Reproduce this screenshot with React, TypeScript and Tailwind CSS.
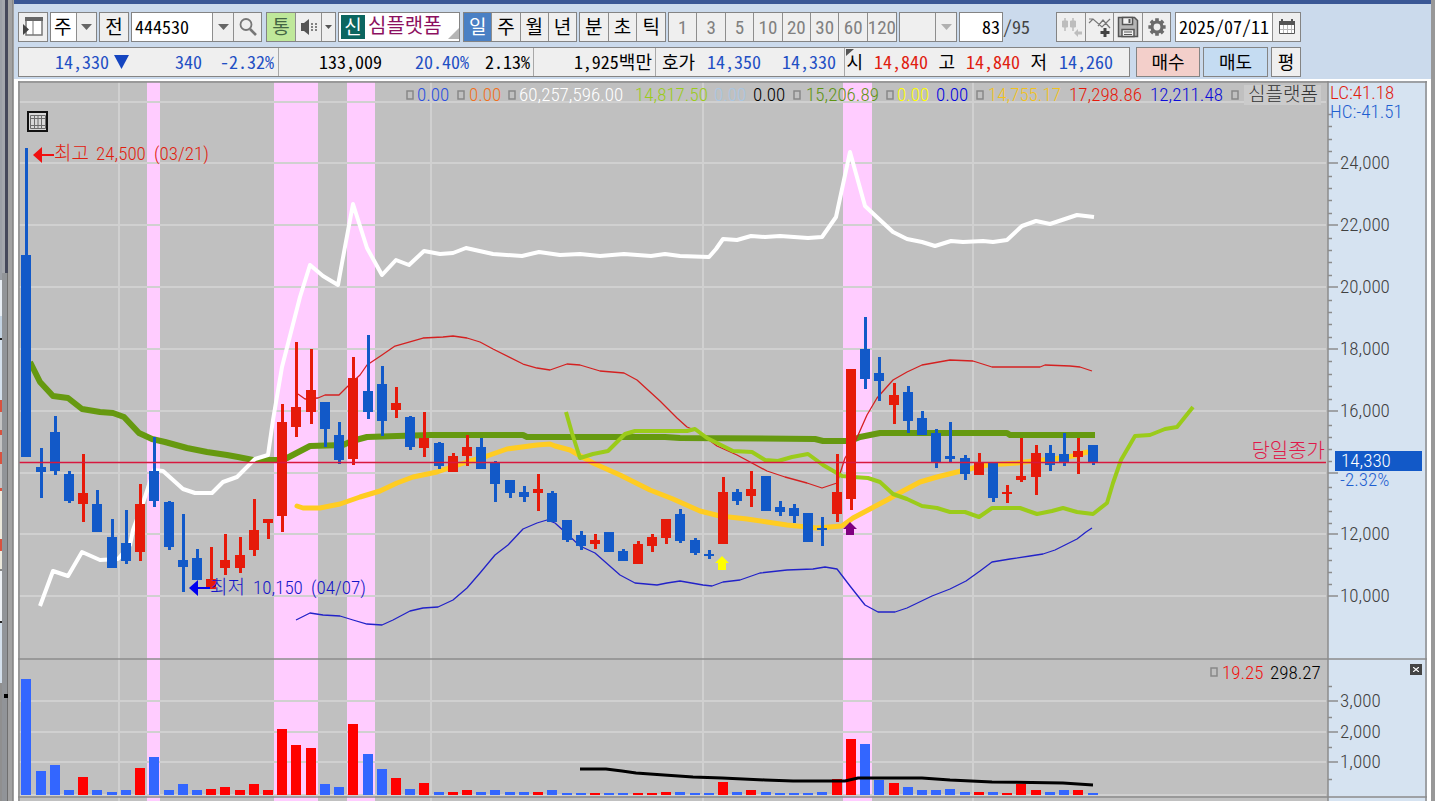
/**
 * Daily candle chart window
 *
 * Layout:
 *   - Toolbar: symbol lookup, period switches, zoom range, date
 *   - Quote strip with the order buttons
 *   - Price pane and volume pane drawn in one SVG
 */
import React from 'react';
import clsx from 'clsx';

const BTN = 'flex items-center justify-center shrink-0 h-full border-[#8e8e8e]';
const GROUP = 'flex shrink-0 h-[30px] border border-[#848484]';
const MONO = "font-['Noto_Sans_Mono_CJK_KR',monospace]";
const NARROW = "font-['Roboto_Condensed','Noto_Sans_CJK_KR',sans-serif]";

const RED = '#e61a0a';
const BLUE = '#1259c8';

/* ---------------------------------------------------------------- data */

// [high, body top, body bottom, low, volume top, rising]
type Bar = [number, number, number, number, number, 0 | 1];

const BARS: Bar[] = [
  [148, 255, 457, 457, 679, 0],
  [448, 467, 472, 498, 771, 0],
  [416, 432, 471, 475, 765, 0],
  [471, 474, 501, 503, 790, 0],
  [454, 493, 504, 522, 777, 1],
  [490, 504, 532, 532, 790, 0],
  [519, 537, 568, 568, 792, 0],
  [510, 543, 561, 564, 790, 0],
  [484, 504, 552, 561, 768, 1],
  [437, 471, 501, 507, 757, 0],
  [501, 502, 547, 550, 790, 0],
  [514, 560, 567, 592, 784, 0],
  [549, 558, 580, 580, 790, 0],
  [547, 579, 589, 589, 789, 1],
  [534, 560, 568, 575, 787, 1],
  [537, 555, 568, 573, 790, 1],
  [499, 530, 550, 556, 784, 1],
  [519, 519, 523, 539, 790, 1],
  [404, 422, 516, 532, 729, 1],
  [342, 407, 427, 437, 745, 1],
  [349, 390, 412, 424, 748, 1],
  [402, 402, 429, 447, 784, 0],
  [422, 435, 460, 464, 787, 0],
  [357, 378, 459, 465, 724, 1],
  [335, 391, 412, 419, 754, 0],
  [366, 384, 421, 436, 769, 0],
  [387, 403, 410, 418, 778, 1],
  [416, 417, 447, 450, 789, 0],
  [412, 438, 448, 457, 783, 1],
  [442, 443, 466, 469, 792, 0],
  [453, 456, 472, 472, 792, 1],
  [435, 447, 456, 466, 790, 1],
  [438, 447, 469, 469, 792, 0],
  [461, 463, 484, 502, 790, 0],
  [480, 480, 493, 498, 792, 0],
  [486, 492, 497, 502, 792, 0],
  [474, 489, 493, 511, 792, 1],
  [491, 493, 522, 522, 790, 0],
  [520, 520, 540, 542, 793, 0],
  [531, 535, 546, 550, 793, 0],
  [534, 540, 544, 549, 793, 1],
  [532, 532, 552, 552, 793, 0],
  [549, 551, 561, 561, 793, 0],
  [541, 544, 564, 564, 793, 1],
  [534, 537, 546, 552, 793, 1],
  [519, 519, 538, 544, 792, 1],
  [509, 514, 541, 543, 792, 0],
  [538, 540, 553, 555, 793, 0],
  [550, 554, 556, 559, 793, 0],
  [477, 492, 544, 544, 782, 1],
  [489, 492, 501, 505, 792, 0],
  [471, 489, 496, 507, 790, 1],
  [476, 476, 511, 511, 792, 0],
  [501, 507, 512, 516, 793, 0],
  [504, 508, 516, 523, 793, 0],
  [513, 513, 542, 542, 793, 0],
  [517, 528, 530, 546, 792, 0],
  [454, 492, 514, 522, 779, 1],
  [369, 369, 499, 510, 739, 1],
  [317, 349, 379, 389, 744, 0],
  [357, 373, 381, 401, 780, 0],
  [383, 395, 405, 424, 783, 1],
  [386, 392, 421, 433, 787, 0],
  [411, 418, 435, 435, 790, 0],
  [429, 433, 462, 468, 790, 0],
  [422, 456, 459, 462, 789, 0],
  [455, 458, 474, 480, 792, 0],
  [453, 463, 475, 475, 792, 1],
  [463, 463, 498, 502, 792, 0],
  [485, 492, 494, 503, 793, 1],
  [438, 476, 480, 482, 784, 1],
  [445, 453, 477, 495, 790, 1],
  [445, 453, 465, 471, 792, 0],
  [433, 454, 462, 466, 790, 0],
  [438, 451, 457, 474, 790, 1],
  [445, 445, 462, 465, 793, 0],
];

const barX = (i: number): number => Math.round(26.4 + 14.215 * i);

const OBV =
  '40,606 53,571 68,576 82,552 100,560 118,559 130,545 133,530 144,500 154,470 163,471 183,489 195,493 212,493 223,482 237,477 255,459 268,455 273,420 282,367 300,297 310,265 323,276 338,285 342,263 353,204 367,248 382,275 396,260 409,265 424,251 440,254 453,253 466,248 493,254 522,256 539,252 560,255 580,254 600,256 624,254 651,256 665,254 680,256 709,257 716,249 723,239 737,240 751,236 765,237 780,236 808,238 822,237 836,217 850,152 865,206 880,220 893,232 907,239 922,242 935,246 951,241 963,242 983,241 993,242 1007,240 1022,226 1036,221 1050,224 1077,215 1094,217';
const VWAP =
  '30,362 40,382 53,396 68,398 82,409 100,412 113,413 124,417 139,433 152,439 165,442 187,448 207,452 227,455 238,457 253,460 277,460 287,458 310,446 343,445 352,441 367,437 397,436 430,435 523,435 527,437 665,437 680,438 815,439 823,441 850,441 860,437 880,433 1007,433 1010,435 1095,435';
const MA20 =
  '297,506 303,508 320,508 340,504 360,497 380,491 397,483 413,477 437,472 467,462 487,456 507,449 537,445 550,444 555,446 570,450 593,463 620,475 650,490 673,499 700,511 720,516 747,519 787,525 817,528 842,526 853,518 870,509 887,500 903,491 920,482 937,477 953,473 973,468 987,465 1017,463 1033,461 1053,459 1073,456 1087,452';
const LAGGING =
  '566,412 572,433 580,458 593,454 608,451 625,434 635,431 687,431 695,429 707,438 733,451 752,452 765,460 778,461 792,457 808,454 823,465 842,476 853,477 868,478 880,482 893,494 907,499 922,506 937,508 950,512 965,512 979,517 992,508 1020,508 1037,514 1052,511 1063,508 1077,512 1093,514 1107,503 1113,483 1121,460 1135,436 1150,435 1165,429 1177,427 1185,417 1193,407';
const BAND_UP =
  '298,394 305,399 318,398 325,395 339,395 347,387 360,375 367,365 382,355 395,346 423,338 443,337 453,336 467,338 480,342 493,349 523,364 537,368 550,370 567,364 580,365 600,371 624,373 637,380 660,401 677,418 687,427 697,431 717,446 737,455 767,471 785,477 807,483 822,488 837,483 845,458 855,442 859,433 867,415 877,398 893,380 907,372 922,365 950,360 973,361 992,367 1040,367 1045,365 1070,366 1080,367 1092,371';
const BAND_LOW =
  '296,620 310,613 323,615 340,616 353,620 367,624 382,625 393,620 410,611 423,608 438,607 453,600 467,588 480,573 495,555 508,545 523,529 537,523 547,520 555,523 566,533 580,546 595,553 620,575 635,583 657,585 667,583 680,581 703,585 712,586 723,582 740,580 760,573 787,570 813,569 825,567 837,569 850,586 865,605 878,612 895,612 907,608 932,596 950,589 966,581 980,571 992,562 1010,559 1030,556 1043,554 1055,550 1065,545 1077,539 1086,532 1092,528';
const VOLUME_MA =
  '580,769 606,769 622,771 636,773 664,775 693,777 722,778 765,780 793,781 845,781 858,778 922,778 950,780 992,782 1063,783 1093,785';

const PRICE_LEVELS: [number, string][] = [
  [163, '24,000'],
  [225, '22,000'],
  [287, '20,000'],
  [349, '18,000'],
  [411, '16,000'],
  [473, ''],
  [534, '12,000'],
  [596, '10,000'],
];
const VOLUME_LEVELS: [number, string][] = [
  [701, '3,000'],
  [732, '2,000'],
  [762, '1,000'],
];
const MINOR_TICKS = [
  114, 126, 139, 151, 176, 188, 200, 213, 238, 250, 262, 275, 300, 312, 324, 337, 361, 374, 386, 399, 425, 437, 449,
  461, 487, 499, 511, 523, 548, 560, 572, 584, 686, 717, 747, 779,
];
// session-of-interest stripes: [x, width]
const STRIPES: [number, number][] = [
  [147, 13],
  [274, 44],
  [347, 28],
  [843, 29],
];
const MONTHS = [119, 431, 703, 973];

const LEGEND: [number, string, string][] = [
  [417, '0.00', '#2b50e0'],
  [469, '0.00', '#f0701e'],
  [519, '60,257,596.00', '#ffffff'],
  [635, '14,817.50', '#9bcb1a'],
  [714, '0.00', '#a9c6e2'],
  [753, '0.00', '#000000'],
  [806, '15,206.89', '#5f9412'],
  [897, '0.00', '#ffff00'],
  [936, '0.00', '#0000e0'],
  [988, '14,755.17', '#f2c21c'],
  [1069, '17,298.86', '#e61a0a'],
  [1150, '12,211.48', '#0c0cd8'],
];
const LEGEND_BOXES = [407, 458, 509, 794, 887, 977, 1232];

/* --------------------------------------------------------------- icons */

function Caret({ tone = 'text-[#666]' }: { tone?: string }): React.ReactElement {
  return (
    <svg width="11" height="6" viewBox="0 0 11 6" className={tone}>
      <path d="M0 0h11L5.500 6z" fill="currentColor" />
    </svg>
  );
}

function PanelIcon(): React.ReactElement {
  return (
    <svg width="22" height="22" viewBox="0 0 22 22">
      <path d="M4 2h16v17H4z" fill="#fff" stroke="#777" strokeWidth="1.500" />
      <path d="M3 1h18v4H3z" fill="#666" />
      <path d="M11 5v14" stroke="#777" />
      <path d="M1 8l6 5.500L1 19z" fill="#444" />
    </svg>
  );
}

function SearchIcon(): React.ReactElement {
  return (
    <svg width="20" height="20" viewBox="0 0 20 20" fill="none" stroke="#777">
      <circle cx="8" cy="7.500" r="5.500" strokeWidth="1.800" />
      <path d="M12 12l6 6" strokeWidth="2.600" />
    </svg>
  );
}

function SpeakerIcon(): React.ReactElement {
  return (
    <svg width="20" height="20" viewBox="0 0 20 20" fill="#555">
      <path d="M2 6h3l5-4v16l-5-4H2z" />
      <path d="M12 6h2v2h-2zM12 9h2v2h-2zM12 12h2v2h-2zM16 6h2v2h-2zM16 9h2v2h-2zM16 12h2v2h-2z" opacity=".7" />
    </svg>
  );
}

function CandleBackIcon(): React.ReactElement {
  return (
    <svg width="24" height="24" viewBox="0 0 24 24" fill="#bdbdbd" stroke="#bdbdbd">
      <path d="M6 3v13M14 3v13" strokeWidth="1.500" />
      <path d="M3.500 6h5v6h-5zM11.500 6h5v6h-5z" />
      <path d="M15 18l4-4v2.500h4v3h-4V22z" stroke="none" />
    </svg>
  );
}

function AddLineIcon(): React.ReactElement {
  return (
    <svg width="24" height="24" viewBox="0 0 24 24" fill="none">
      <path d="M1 8l4-4 9 8 8-8M1 4h4M10 11l5-6 7 8" stroke="#777" strokeWidth="1.200" />
      <path d="M17 13v9M12.500 17.500h9" stroke="#444" strokeWidth="3" />
    </svg>
  );
}

function SaveIcon(): React.ReactElement {
  return (
    <svg width="24" height="24" viewBox="0 0 24 24" fill="none" stroke="#555" strokeWidth="1.500">
      <path d="M2.500 2.500h16l3 3v16h-19z" fill="#b5b5b5" />
      <path d="M6.500 2.500h10v7h-10z" fill="#f2f2f2" />
      <path d="M13.500 4v4" strokeWidth="2" />
      <path d="M6 14.500h12v7H6z" fill="#f2f2f2" />
      <path d="M8 17h8M8 19.500h8" strokeWidth="1" />
    </svg>
  );
}

function GearIcon(): React.ReactElement {
  return (
    <svg width="20" height="20" viewBox="0 0 22 22" fill="none" stroke="#6b6b6b">
      <circle cx="11" cy="11" r="5.500" strokeWidth="3.500" />
      <path
        d="M11 1.500v4M11 16.500v4M1.500 11h4M16.500 11h4M4.300 4.300l2.500 2.500M15.200 15.200l2.500 2.500M4.300 17.700l2.500-2.500M15.200 6.800l2.500-2.500"
        strokeWidth="4"
      />
    </svg>
  );
}

function CalendarIcon(): React.ReactElement {
  return (
    <svg width="18" height="18" viewBox="0 0 18 18">
      <path d="M1.500 3.500h15v12h-15z" fill="#fff" stroke="#555" />
      <path d="M1 3h16v4H1z" fill="#555" />
      <path d="M4 1v3M14 1v3" stroke="#555" strokeWidth="2" />
      <path d="M5.500 7v8M9.500 7v8M13.500 7v8M2 11.500h14" stroke="#b8b8b8" />
    </svg>
  );
}

function GridIcon(): React.ReactElement {
  return (
    <svg width="16" height="16" viewBox="0 0 16 16" fill="none" stroke="#6d6d6d">
      <path d="M.5 1.500h15v13H.5zM.5 4.500h15M.5 11.500h15M4.500 1v13M8 1v13M11.500 1v13" />
    </svg>
  );
}

/* -------------------------------------------------------------- chrome */

function EdgeStrip(): React.ReactElement {
  // sliver of the neighbouring window
  const slices: [number, string][] = [
    [280, 'bg-[#9b9fa6]'],
    [36, 'bg-[#e8eef5]'],
    [22, 'bg-[#c3d3e3]'],
    [2, 'bg-[#222]'],
    [60, 'bg-[#d4e0ec]'],
    [12, 'bg-[#d9523f]'],
    [18, 'bg-[#c4c4c4]'],
    [5, 'bg-[#d9523f]'],
    [17, 'bg-[#c4c4c4]'],
    [12, 'bg-[#d9523f]'],
    [24, 'bg-[#c4c4c4]'],
    [3, 'bg-[#d9523f]'],
    [48, 'bg-[#ece9dc]'],
    [12, 'bg-[#d9523f]'],
    [18, 'bg-[#ece9dc]'],
    [2, 'bg-[#888]'],
    [50, 'bg-[#eef2f6]'],
    [2, 'bg-[#222]'],
    [60, 'bg-[#d4e0ec]'],
  ];
  return (
    <div className="flex w-[14px] shrink-0 bg-[#a0a0a0]" aria-hidden="true">
      <div className="w-[2px] overflow-hidden bg-[#8f8f8f]">
        {slices.map(([h, tone], i) => (
          <div key={i} className={tone} style={{ height: h }} />
        ))}
      </div>
      <div className="flex w-[6px] flex-col">
        <div className="h-[273px] border-r-3 border-[#45485a] bg-[#a3a6ac]" />
        <div className="flex grow flex-col border-r border-[#6f6f6f] bg-[#919498] pt-[421px]">
          <div className="ml-[2px] size-[4px] bg-black" />
        </div>
      </div>
      <div className="w-[5px] border-r border-[#8a8a8a] bg-[#a2a2a2]" />
    </div>
  );
}

interface SegmentedProps {
  items: string[];
  label: string;
  width: string;
  tone?: string;
  active?: string;
}

function Segmented({ items, label, width, tone, active }: SegmentedProps): React.ReactElement {
  return (
    <div role="group" aria-label={label} className={clsx(GROUP, width, tone)}>
      {items.map((item, i) => (
        <button
          key={item}
          className={clsx(
            BTN,
            'flex-1',
            i > 0 && 'border-l',
            item === active ? 'bg-[#4a80c4] text-white' : 'bg-[#efefef]'
          )}
        >
          {item}
        </button>
      ))}
    </div>
  );
}

function Toolbar(): React.ReactElement {
  const face = 'bg-[#efefef]';
  return (
    <div className={clsx('flex gap-[2px] pl-1 text-[19px] leading-none', NARROW)}>
      <div className={clsx(GROUP, face)}>
        <button className={clsx(BTN, 'w-[28px]')} aria-label="패널 열기">
          <PanelIcon />
        </button>
      </div>
      <div className={clsx(GROUP, face)}>
        <select aria-label="종목 구분" className="w-[25px] appearance-none bg-white pl-[3px]">
          <option>주</option>
        </select>
        <span className={clsx(BTN, 'w-[20px] border-l')}>
          <Caret />
        </span>
      </div>
      <div className={clsx(GROUP, face)}>
        <button className={clsx(BTN, 'w-[28px]')}>전</button>
      </div>
      <div className={clsx(GROUP, face)}>
        <input
          aria-label="종목코드"
          defaultValue="444530"
          className={clsx('w-[80px] bg-white pb-[2px] pl-[3px] text-[18px]', MONO)}
        />
        <button className={clsx(BTN, 'w-[21px] border-l')} aria-label="최근 종목">
          <Caret />
        </button>
        <button className={clsx(BTN, 'w-[28px] border-l')} aria-label="종목 검색">
          <SearchIcon />
        </button>
      </div>
      <div className={clsx(GROUP, face, 'ml-[2px]')}>
        <button className={clsx(BTN, 'w-[28px] bg-[#bfe89a] text-[#446644]')}>통</button>
        <button className={clsx(BTN, 'w-[26px] border-l')} aria-label="음성">
          <SpeakerIcon />
        </button>
        <button className={clsx(BTN, 'w-[14px] border-l')} aria-label="음성 설정">
          <svg width="7" height="4" viewBox="0 0 7 4">
            <path d="M0 0h7L3.500 4z" fill="#555" />
          </svg>
        </button>
      </div>
      <div className={clsx(GROUP, 'w-[122px] items-center bg-white')}>
        <span className="ml-[2px] flex size-[24px] shrink-0 items-center justify-center bg-[#0b6660] text-white">신</span>
        <span className="ml-[3px] grow pb-[2px] text-[20px] text-[#8c1060]">심플랫폼</span>
        <svg width="11" height="11" viewBox="0 0 11 11" className="mb-[2px] self-end">
          <path d="M11 0v11H0z" fill="#b5b5b5" />
        </svg>
      </div>
      <div className="ml-[1px] flex gap-[2px]">
        <Segmented label="주기" items={['일', '주', '월', '년']} width="w-[114px]" active="일" />
        <Segmented label="단위" items={['분', '초', '틱']} width="w-[87px]" />
        <Segmented
          label="간격"
          items={['1', '3', '5', '10', '20', '30', '60', '120']}
          width="w-[229px]"
          tone="text-[#808080]"
        />
      </div>
      <div className={clsx(GROUP, face)}>
        <select aria-label="사용자 간격" className="w-[35px] appearance-none">
          <option></option>
        </select>
        <span className={clsx(BTN, 'w-[21px] border-l')}>
          <Caret tone="text-[#b0b0b0]" />
        </span>
      </div>
      <div className={clsx('flex items-center text-[18px]', MONO)}>
        <div className={GROUP}>
          <input
            id="bars"
            aria-label="표시 봉 수"
            defaultValue="83"
            className="w-[42px] bg-white pr-[2px] pb-[2px] text-right"
          />
        </div>
        <label htmlFor="bars" className="pb-[2px] text-[#444]">
          /95
        </label>
      </div>
      <div className={clsx(GROUP, face, 'ml-[24px]')}>
        <button disabled className={clsx(BTN, 'w-[28px]')} aria-label="되돌리기">
          <CandleBackIcon />
        </button>
        <button className={clsx(BTN, 'w-[28px] border-l')} aria-label="지표 추가">
          <AddLineIcon />
        </button>
        <button className={clsx(BTN, 'w-[29px] border-l')} aria-label="저장">
          <SaveIcon />
        </button>
        <button className={clsx(BTN, 'w-[28px] border-l')} aria-label="환경설정">
          <GearIcon />
        </button>
      </div>
      <div className={clsx(GROUP, face, 'ml-[2px]')}>
        <input
          aria-label="기준일"
          defaultValue="2025/07/11"
          className={clsx('w-[96px] bg-white pb-[2px] pl-[3px] text-[18px]', MONO)}
        />
        <button className={clsx(BTN, 'w-[28px] border-l')} aria-label="달력">
          <CalendarIcon />
        </button>
      </div>
    </div>
  );
}

function Quote({ w, tone, children }: { w: string; tone?: string; children: React.ReactNode }): React.ReactElement {
  return <span className={clsx('shrink-0 pb-[3px] text-right whitespace-nowrap', w, tone)}>{children}</span>;
}

function QuoteStrip(): React.ReactElement {
  const blue = 'text-[#1f4fc4]';
  const red = 'text-[#e0200f]';
  const cell = 'flex items-center h-full border-r border-[#a8a8a8]';
  const order = 'h-full border border-[#848484] pb-[3px]';
  return (
    <div className={clsx('mt-[5px] flex h-[30px] gap-[3px] pl-1 text-[18px] leading-none', MONO)}>
      <div className="mr-[3px] flex w-[1112px] shrink-0 border border-[#848484] bg-[#efefef]">
        <div className={clsx(cell, 'w-[260px]')}>
          <Quote w="w-[90px]" tone={blue}>14,330</Quote>
          <svg width="15" height="14" viewBox="0 0 15 14" className="ml-[5px]">
            <path d="M0 0h15L7.500 14z" fill="#1545c0" />
          </svg>
          <Quote w="w-[73px]" tone={blue}>340</Quote>
          <Quote w="w-[72px]" tone={blue}>-2.32%</Quote>
        </div>
        <div className={clsx(cell, 'w-[255px]')}>
          <Quote w="w-[103px]">133,009</Quote>
          <Quote w="w-[87px]" tone={blue}>20.40%</Quote>
          <Quote w="w-[61px]">2.13%</Quote>
        </div>
        <div className={clsx(cell, 'w-[122px]')}>
          <Quote w="w-[118px]">1,925백만</Quote>
        </div>
        <div className={clsx(cell, 'w-[189px]')}>
          <Quote w="w-[39px]">호가</Quote>
          <Quote w="w-[66px]" tone={blue}>14,350</Quote>
          <Quote w="w-[75px]" tone={blue}>14,330</Quote>
        </div>
        <div className="relative flex h-full items-center">
          <svg width="8" height="8" viewBox="0 0 8 8" className="absolute top-[1px] left-[1px]">
            <path d="M0 0h8L0 7z" fill="#555" />
          </svg>
          <Quote w="w-[18px]">시</Quote>
          <Quote w="w-[65px]" tone={red}>14,840</Quote>
          <Quote w="w-[27px]">고</Quote>
          <Quote w="w-[65px]" tone={red}>14,840</Quote>
          <Quote w="w-[27px]">저</Quote>
          <Quote w="w-[66px]" tone={blue}>14,260</Quote>
        </div>
      </div>
      <button className={clsx(order, 'w-[64px] bg-[#f3cfca]')}>매수</button>
      <button className={clsx(order, 'w-[65px] bg-[#c5dcf2]')}>매도</button>
      <button className={clsx(order, 'w-[30px] bg-[#efefef]')}>평</button>
    </div>
  );
}

/* --------------------------------------------------------------- chart */

function Candles(): React.ReactElement {
  return (
    <>
      {BARS.map(([high, top, bottom, low, volume, rising], i) => {
        const x = barX(i);
        const color = rising ? RED : BLUE;
        return (
          <g key={i}>
            <rect x={x - 1} y={high} width="3" height={low - high} fill={color} />
            <rect x={x - 5} y={top} width="10" height={bottom - top} fill={color} />
            <rect x={x - 5} y={volume} width="10" height={795 - volume} fill={rising ? '#ff0000' : '#3366ff'} />
          </g>
        );
      })}
    </>
  );
}

function Chart(): React.ReactElement {
  return (
    <svg
      viewBox="18 81 1409 720"
      className={clsx('block w-full text-[19px] font-light', NARROW)}
      role="img"
      aria-label="심플랫폼 일봉 차트"
    >
      <rect x="18" y="81" width="1409" height="720" fill="#c0c0c0" />
      <rect x="1328" y="81" width="99" height="720" fill="#d6e3f1" />
      {STRIPES.map(([x, w]) => (
        <rect key={x} x={x} y="82" width={w} height="719" fill="#ffccff" />
      ))}

      {/* grid */}
      <g stroke="#d0d0d0" strokeWidth="2">
        {MONTHS.map((x) => (
          <path key={x} d={`M${x} 82V801`} />
        ))}
        {[102, ...PRICE_LEVELS.map(([y]) => y), ...VOLUME_LEVELS.map(([y]) => y), 795].map((y) => (
          <path key={y} d={`M19 ${y}H1326`} />
        ))}
      </g>

      {/* overlays behind the candles */}
      <g fill="none" strokeLinejoin="round">
        <polyline points={VWAP} stroke="#669910" strokeWidth="6" />
        <polyline points={OBV} stroke="#ffffff" strokeWidth="4" />
        <polyline points={MA20} stroke="#ffcc22" strokeWidth="5" strokeLinecap="round" />
        <polyline points={BAND_UP} stroke="#d42020" strokeWidth="1.300" />
        <polyline points={BAND_LOW} stroke="#2222c8" strokeWidth="1.300" />
        <polyline points={LAGGING} stroke="#9bcb1a" strokeWidth="4" />
      </g>
      <Candles />
      <polyline points={VOLUME_MA} fill="none" stroke="#000" strokeWidth="3" />

      {/* closing price */}
      <path d="M19 462.500H1326" stroke="#d8183e" strokeWidth="1.500" />
      <text x="1325" y="458" textAnchor="end" fill="#e0184a" className="text-[20px]">당일종가</text>

      {/* signal arrows */}
      <path d="M722 556l7 7h-3v7h-8v-7h-3z" fill="#ffff00" />
      <path d="M850 522l7 7h-3v6h-8v-6h-3z" fill="#800080" />

      {/* high and low of the range */}
      <path d="M33 155l9-8v7h12v2H42v7z" fill="#f01010" />
      <text y="160" fill="#e0200f">
        <tspan x="54">최고</tspan> <tspan x="96">24,500</tspan> <tspan x="154">(03/21)</tspan>
      </text>
      <path d="M189 588l9-8v7h12v2h-12v7z" fill="#0000f0" />
      <text y="594" fill="#1414c8">
        <tspan x="210">최저</tspan> <tspan x="253">10,150</tspan> <tspan x="311">(04/07)</tspan>
      </text>

      {/* legend */}
      {LEGEND_BOXES.map((x) => (
        <rect key={x} x={x} y="91" width="6" height="8" fill="none" stroke="#888" strokeWidth="1.500" />
      ))}
      {LEGEND.map(([x, value, color]) => (
        <text key={x} x={x} y="101" fill={color}>{value}</text>
      ))}
      <rect x="1244" y="85" width="77" height="20" fill="#cbcbcb" />
      <text x="1248" y="101" fill="#333">심플랫폼</text>
      <rect x="1211" y="668" width="6" height="8" fill="none" stroke="#888" strokeWidth="1.500" />
      <text x="1222" y="679" fill="#f01010">19.25</text>
      <text x="1270" y="679">298.27</text>

      {/* axis */}
      <g stroke="#8c8c8c" strokeWidth="1.500">
        {[...PRICE_LEVELS, ...VOLUME_LEVELS].map(([y]) => (
          <path key={y} d={`M1328 ${y}h10`} />
        ))}
        {MINOR_TICKS.map((y) => (
          <path key={y} d={`M1328 ${y}.500h4`} />
        ))}
        <path d="M1328 81V801M1426 81V801" />
        <path d="M18 82H1427M19 81V801M18 659H1427M18 797H1427" />
      </g>
      <g fill="#404040">
        {[...PRICE_LEVELS, ...VOLUME_LEVELS].map(([y, label]) => (
          <text key={y} x="1340" y={y + 6}>{label}</text>
        ))}
      </g>
      <text x="1330" y="99" fill="#e0200f">LC:41.18</text>
      <text x="1330" y="118" fill="#1f5fd0">HC:-41.51</text>
      <rect x="1335" y="451" width="87" height="20" fill="#1259c8" />
      <text x="1341" y="467" fill="#fff">14,330</text>
      <text x="1340" y="486" fill="#1f5fd0">-2.32%</text>
    </svg>
  );
}

export default function App(): React.ReactElement {
  return (
    <div className="flex h-screen overflow-hidden bg-[#a0a0a0]">
      <EdgeStrip />
      <main className="min-w-0 grow overflow-hidden border-t-4 border-[#3a5795] bg-white">
        <header className="overflow-hidden bg-[#cbdaec] pt-[8px] pb-[2px]">
          <Toolbar />
          <QuoteStrip />
        </header>
        <div className="relative px-1 pt-[2px]">
          <Chart />
          <button
            aria-label="데이터 표"
            className="absolute top-[32px] left-[13px] flex size-[21px] items-center justify-center border-2 border-[#111] bg-[#d8d8d8]"
          >
            <GridIcon />
          </button>
          <button
            aria-label="지표 닫기"
            className="absolute top-[585px] right-[9px] flex h-[11px] w-[12px] items-center justify-center bg-[#444]"
          >
            <svg width="6" height="5" viewBox="0 0 6 5">
              <path d="M0 0l6 5M6 0L0 5" stroke="#fff" strokeWidth="1.200" />
            </svg>
          </button>
        </div>
      </main>
      <div className="w-[4px] shrink-0 bg-[#989898]" aria-hidden="true" />
    </div>
  );
}
